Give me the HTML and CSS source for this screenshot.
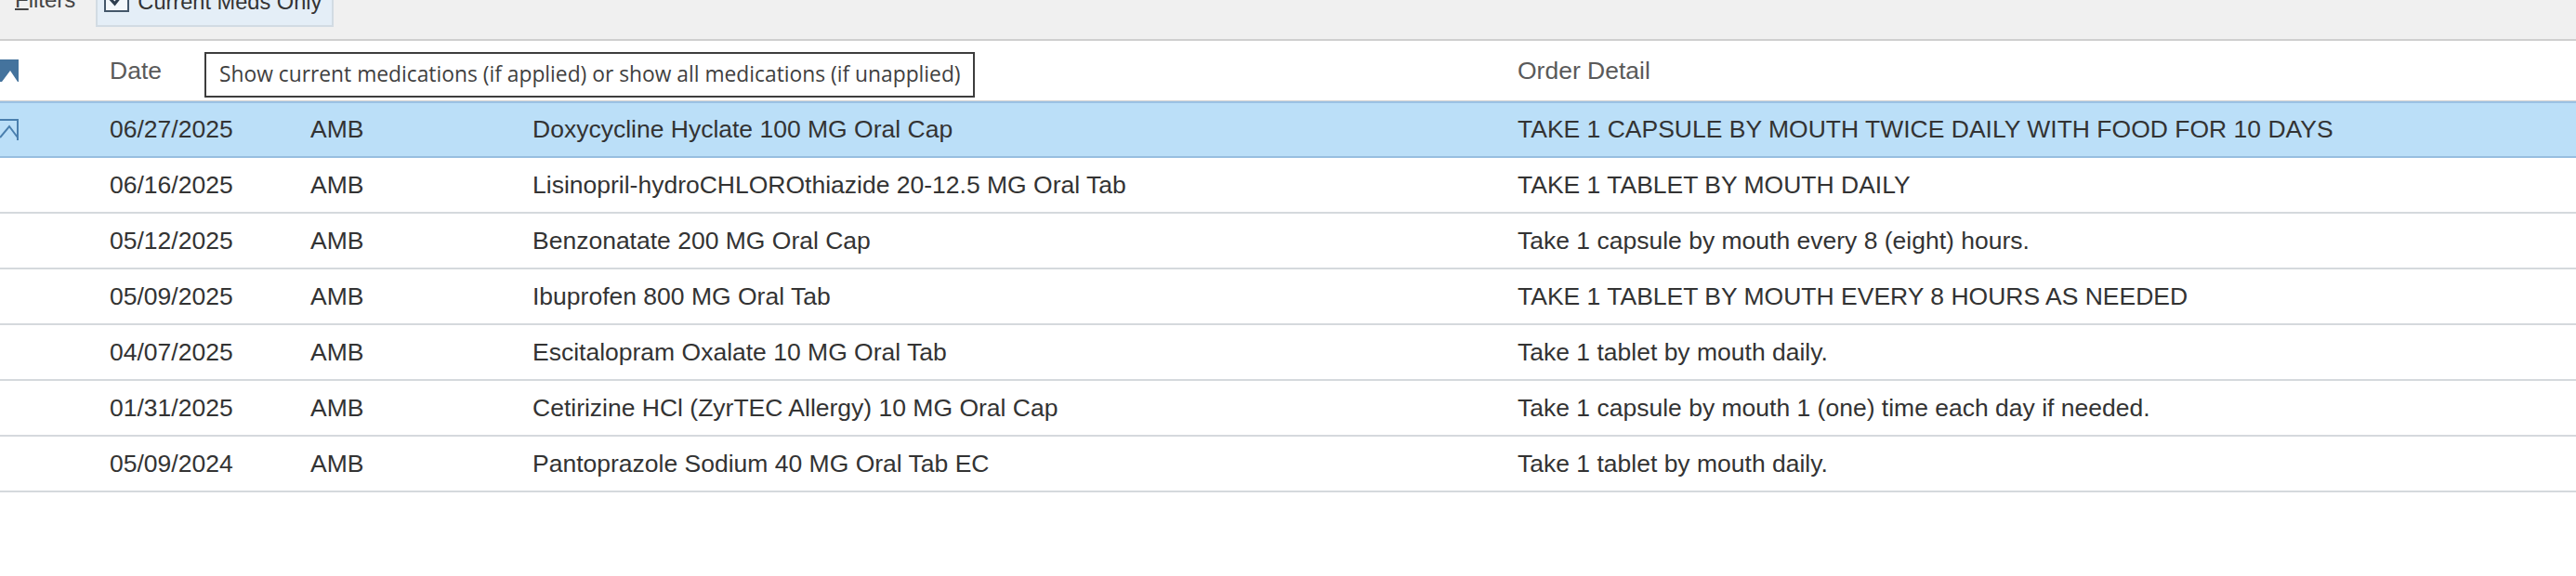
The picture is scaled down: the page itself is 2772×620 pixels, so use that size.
FILE: index.html
```html
<!DOCTYPE html>
<html lang="en">
<head>
<meta charset="utf-8">
<title>Medications</title>
<link rel="stylesheet" href="styles.css">
</head>
<body>
<div class="toolbar">
  <span class="filters"><u>F</u>ilters</span>
  <div class="toggle">
    <span class="check">
      <svg width="23" height="23" viewBox="0 0 23 23"><path d="M4 10 L9.5 16 L19 4" fill="none" stroke="#2f3f4f" stroke-width="3.2"/></svg>
    </span>
    <span class="toggle-label">Current Meds Only</span>
  </div>
</div>
<div class="grid">
  <div class="row head">
    <span class="icon">
      <svg width="20" height="24" viewBox="0 0 20 24"><path d="M0 0 H20 V24 H19 L11 12 L2 24 H0 Z" fill="#44739d"/></svg>
    </span>
    <span>Date</span>
    <span></span>
    <span></span>
    <span>Order Detail</span>
    <div class="tooltip">Show current medications (if applied) or show all medications (if unapplied)</div>
  </div>
  <div class="row selected">
    <span class="icon">
      <svg width="20" height="24" viewBox="0 0 20 24"><path d="M0 1 H19 V23 M0 20 L10 8 L19 20" fill="none" stroke="#4a7fae" stroke-width="2"/></svg>
    </span>
    <span>06/27/2025</span><span>AMB</span><span>Doxycycline Hyclate 100 MG Oral Cap</span><span>TAKE 1 CAPSULE BY MOUTH TWICE DAILY WITH FOOD FOR 10 DAYS</span>
  </div>
  <div class="row">
    <span class="icon"></span>
    <span>06/16/2025</span><span>AMB</span><span>Lisinopril-hydroCHLOROthiazide 20-12.5 MG Oral Tab</span><span>TAKE 1 TABLET BY MOUTH DAILY</span>
  </div>
  <div class="row">
    <span class="icon"></span>
    <span>05/12/2025</span><span>AMB</span><span>Benzonatate 200 MG Oral Cap</span><span>Take 1 capsule by mouth every 8 (eight) hours.</span>
  </div>
  <div class="row">
    <span class="icon"></span>
    <span>05/09/2025</span><span>AMB</span><span>Ibuprofen 800 MG Oral Tab</span><span>TAKE 1 TABLET BY MOUTH EVERY 8 HOURS AS NEEDED</span>
  </div>
  <div class="row">
    <span class="icon"></span>
    <span>04/07/2025</span><span>AMB</span><span>Escitalopram Oxalate 10 MG Oral Tab</span><span>Take 1 tablet by mouth daily.</span>
  </div>
  <div class="row">
    <span class="icon"></span>
    <span>01/31/2025</span><span>AMB</span><span>Cetirizine HCl (ZyrTEC Allergy) 10 MG Oral Cap</span><span>Take 1 capsule by mouth 1 (one) time each day if needed.</span>
  </div>
  <div class="row">
    <span class="icon"></span>
    <span>05/09/2024</span><span>AMB</span><span>Pantoprazole Sodium 40 MG Oral Tab EC</span><span>Take 1 tablet by mouth daily.</span>
  </div>
</div>
</body>
</html>
```

FILE: styles.css
```css
html, body {
  margin: 0;
  padding: 0;
  background: #ffffff;
}
body {
  font-family: "Liberation Sans", Arial, sans-serif;
  color: #303030;
  overflow: hidden;
}
.toolbar {
  height: 42px;
  background: #f0f0f0;
  border-bottom: 2px solid #cfcfcf;
  display: flex;
  align-items: flex-end;
  padding-left: 16px;
}
.filters {
  font-size: 24px;
  line-height: 28px;
  color: #444;
  margin-bottom: 28px;
  margin-right: 22px;
}
.filters u {
  text-decoration-thickness: 2px;
}
.toggle {
  height: 56px;
  box-sizing: border-box;
  margin-bottom: 13px;
  background: #e4eef7;
  border: 2px solid #d2dbe3;
  display: flex;
  align-items: flex-end;
  padding: 0 11px 0 7px;
  gap: 9px;
}
.check {
  width: 27px;
  height: 27px;
  box-sizing: border-box;
  border: 2px solid #44576a;
  background: #f4f8fb;
  margin-bottom: 14px;
  display: flex;
  align-items: center;
  justify-content: center;
}
.toggle-label {
  font-size: 23.6px;
  line-height: 28px;
  color: #333;
  margin-bottom: 11px;
}
.grid {
  font-size: 26.5px;
}
.row {
  display: grid;
  grid-template-columns: 118px 216px 239px 1060px 1fr;
  align-items: center;
  height: 58px;
  border-bottom: 2px solid #d5d9dd;
  color: #333333;
  white-space: nowrap;
}
.row.head {
  position: relative;
  height: 64px;
  border-bottom: 1px solid #d4d4d4;
  color: #5a5a5a;
}
.row.selected {
  height: 57px;
  background: #bbdff8;
  border-top: 2px solid #9cc2e3;
  border-bottom: 2px solid #97bee0;
}
.icon {
  display: flex;
  align-items: center;
  height: 24px;
}
.icon svg {
  display: block;
}
.tooltip {
  position: absolute;
  left: 220px;
  top: 12px;
  width: 829px;
  height: 49px;
  box-sizing: border-box;
  border: 2px solid #3d3d3d;
  background: #ffffff;
  padding-left: 14px;
  font-family: "Open Sans", "Noto Sans", sans-serif;
  font-size: 22.8px;
  line-height: 44px;
  color: #3f3f3f;
  white-space: nowrap;
  overflow: hidden;
}
```
